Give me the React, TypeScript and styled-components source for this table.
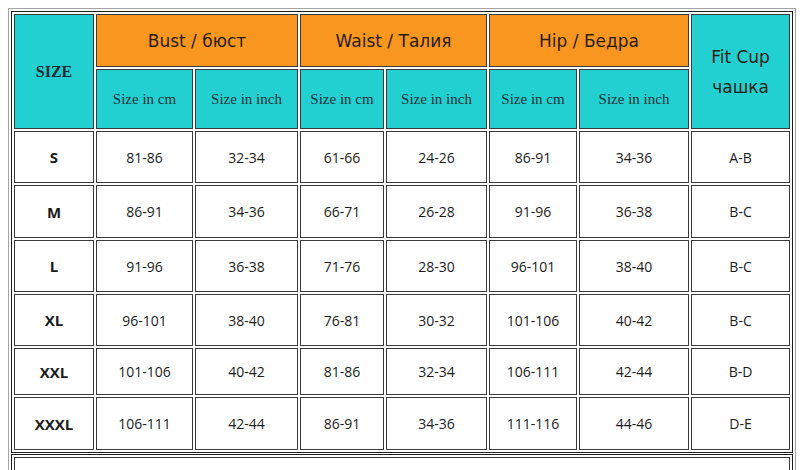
import React from "react";
import styled, { createGlobalStyle } from "styled-components";

const GlobalStyle = createGlobalStyle`
  * {
    box-sizing: border-box;
  }

  body {
    margin: 0;
    background: #ffffff;
  }
`;

const Frame = styled.div`
  margin: 8px 0 0 8px;
  width: 788px;
  padding: 2px 2px 0;
  border: 1px solid #a3a3a3;
  border-bottom: none;
`;

const SizeTable = styled.table`
  width: 782px;
  table-layout: fixed;
  border: 1px solid #1e1e1e;
  border-collapse: separate;
  border-spacing: 2px;
`;

const FooterTable = styled(SizeTable)`
  margin-top: 1px;
`;

const Col = styled.col<{ $w: number }>`
  width: ${(p) => p.$w}px;
`;

const Row = styled.tr<{ $h: number }>`
  height: ${(p) => p.$h}px;
`;

const Cell = styled.td`
  padding: 0;
  border: 1px solid #3a3a3a;
  text-align: center;
  vertical-align: middle;
`;

const GroupHead = styled(Cell)<{ $tone: "orange" | "cyan" }>`
  background: ${(p) => (p.$tone === "orange" ? "#f8961f" : "#22d0d2")};
  color: #2a1d12;
  font-family: "DejaVu Sans", Verdana, sans-serif;
  font-size: 17px;
  line-height: 30px;
`;

const SizeHead = styled(Cell)`
  background: #22d0d2;
  color: #1d2b2c;
  font-family: "Liberation Serif", "Times New Roman", serif;
  font-size: 16px;
  font-weight: bold;
`;

const UnitHead = styled(Cell)`
  background: #22d0d2;
  color: #1f3133;
  font-family: "Liberation Serif", "Times New Roman", serif;
  font-size: 15px;
`;

const DataCell = styled(Cell)<{ $bold?: boolean }>`
  background: #ffffff;
  color: #1b1b1b;
  font-family: "Open Sans", "Noto Sans", sans-serif;
  font-size: ${(p) => (p.$bold ? 15 : 14)}px;
  font-weight: ${(p) => (p.$bold ? 700 : 400)};
`;

const BlankCell = styled(Cell)`
  height: 60px;
  background: #ffffff;
`;

const columns = [80, 97, 103, 84, 101, 88, 110, 99];

const rows = [
  { size: "S", h: 52, values: ["81-86", "32-34", "61-66", "24-26", "86-91", "34-36", "A-B"] },
  { size: "M", h: 53, values: ["86-91", "34-36", "66-71", "26-28", "91-96", "36-38", "B-C"] },
  { size: "L", h: 52, values: ["91-96", "36-38", "71-76", "28-30", "96-101", "38-40", "B-C"] },
  { size: "XL", h: 52, values: ["96-101", "38-40", "76-81", "30-32", "101-106", "40-42", "B-C"] },
  { size: "XXL", h: 47, values: ["101-106", "40-42", "81-86", "32-34", "106-111", "42-44", "B-D"] },
  { size: "XXXL", h: 53, values: ["106-111", "42-44", "86-91", "34-36", "111-116", "44-46", "D-E"] }
];

export default function App() {
  return (
    <>
      <GlobalStyle />
      <Frame>
        <SizeTable>
          <colgroup>
            {columns.map((w, i) => (
              <Col key={i} $w={w} />
            ))}
          </colgroup>
          <tbody>
            <Row $h={53}>
              <SizeHead rowSpan={2}>SIZE</SizeHead>
              <GroupHead $tone="orange" colSpan={2}>Bust / бюст</GroupHead>
              <GroupHead $tone="orange" colSpan={2}>Waist / Талия</GroupHead>
              <GroupHead $tone="orange" colSpan={2}>Hip / Бедра</GroupHead>
              <GroupHead $tone="cyan" rowSpan={2}>
                Fit Cup
                <br />
                чашка
              </GroupHead>
            </Row>
            <Row $h={60}>
              <UnitHead>Size in cm</UnitHead>
              <UnitHead>Size in inch</UnitHead>
              <UnitHead>Size in cm</UnitHead>
              <UnitHead>Size in inch</UnitHead>
              <UnitHead>Size in cm</UnitHead>
              <UnitHead>Size in inch</UnitHead>
            </Row>
            {rows.map((row) => (
              <Row key={row.size} $h={row.h}>
                <DataCell $bold>{row.size}</DataCell>
                {row.values.map((v, i) => (
                  <DataCell key={i}>{v}</DataCell>
                ))}
              </Row>
            ))}
          </tbody>
        </SizeTable>
        <FooterTable>
          <tbody>
            <tr>
              <BlankCell />
            </tr>
          </tbody>
        </FooterTable>
      </Frame>
    </>
  );
}
